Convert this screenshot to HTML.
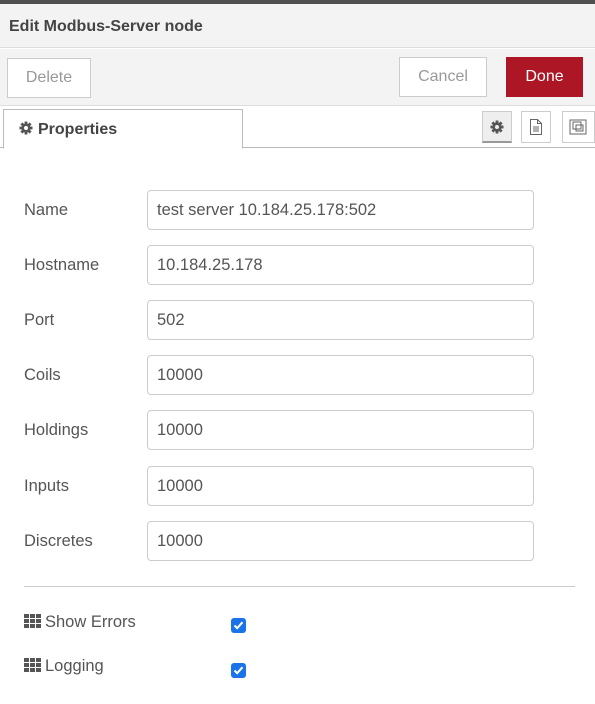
<!DOCTYPE html>
<html><head><meta charset="utf-8"><style>
*{box-sizing:border-box;margin:0;padding:0}
body{width:595px;height:704px;overflow:hidden;background:#fff;font-family:"Liberation Sans",Arial,sans-serif;color:#555;position:relative}
.top{position:absolute;left:0;top:0;width:595px;height:4px;background:#4f4f4f}
.hdr{position:absolute;left:0;top:4px;width:595px;height:44px;background:#f3f3f3;border-bottom:1px solid #ddd;font-weight:bold;font-size:16px;color:#444;padding:14px 0 0 9px}
.bar{position:absolute;left:0;top:49px;width:595px;height:57px;background:#f3f3f3;border-bottom:1px solid #ddd}
.btn{position:absolute;height:40px;border:1px solid #ccc;background:#fff;color:#999;font-size:16px;text-align:center;line-height:38px}
.tabs{position:absolute;left:0;top:106px;width:595px;height:42px;border-bottom:1px solid #bbb;background:#fff}
.tab{position:absolute;left:3px;top:3px;width:240px;height:40px;border:1px solid #bbb;border-bottom:1px solid #fff;background:#fff;font-weight:bold;font-size:16px;color:#444;padding:11px 0 0 15px}
.ib{position:absolute;top:5px;width:30px;height:32px;border:1px solid #ccc;background:#fff}
.lbl{position:absolute;left:24px;font-size:16.5px;color:#555}
.inp{position:absolute;left:147px;width:387px;height:40px;border:1px solid #ccc;border-radius:4px;font-size:16.5px;color:#555;padding:10px 0 0 9px}
.cb{position:absolute;left:231px;width:15px;height:15px;background:#1a73e8;border-radius:3px}
.cb svg{position:absolute;left:2px;top:2px}
.grid{display:inline-block;vertical-align:-1px;margin-right:4px}
</style></head><body>
<div class="top"></div>
<div class="hdr">Edit Modbus-Server node</div>
<div class="bar">
<div class="btn" style="left:7px;top:9px;width:84px">Delete</div>
<div class="btn" style="left:399px;top:8px;width:88px">Cancel</div>
<div class="btn" style="left:506px;top:8px;width:77px;background:#ad1625;border-color:#ad1625;color:#fff">Done</div>
</div>
<div class="tabs">
<div class="tab"><svg width="14" height="14" viewBox="0 0 14 14" style="vertical-align:-1px;margin-right:5px"><g fill="#555"><circle cx="7" cy="7" r="4.6"/><rect x="5.6" y="0.5" width="2.8" height="13"/><rect x="0.5" y="5.6" width="13" height="2.8"/><rect x="5.6" y="0.5" width="2.8" height="13" transform="rotate(45 7 7)"/><rect x="5.6" y="0.5" width="2.8" height="13" transform="rotate(-45 7 7)"/></g><circle cx="7" cy="7" r="2" fill="#fff"/></svg>Properties</div>
<div class="ib" style="left:482px;background:#eee;border-bottom:2px solid #999"><svg width="14" height="14" viewBox="0 0 14 14" style="position:absolute;left:7px;top:8px"><g fill="#555"><circle cx="7" cy="7" r="4.6"/><rect x="5.6" y="0.5" width="2.8" height="13"/><rect x="0.5" y="5.6" width="13" height="2.8"/><rect x="5.6" y="0.5" width="2.8" height="13" transform="rotate(45 7 7)"/><rect x="5.6" y="0.5" width="2.8" height="13" transform="rotate(-45 7 7)"/></g><circle cx="7" cy="7" r="2" fill="#eee"/></svg></div>
<div class="ib" style="left:521px"><svg width="14" height="16" viewBox="0 0 14 16" style="position:absolute;left:7px;top:7px" fill="none" stroke="#666" stroke-width="1"><path d="M1.5 .5h7l4 4v11h-11z M8.5 .5v4h4 M4 8h6 M4 10h6 M4 12h6"/></svg></div>
<div class="ib" style="left:562px;width:33px"><svg width="20" height="18" viewBox="0 0 20 18" style="position:absolute;left:5px;top:6px" fill="none" stroke="#666"><rect x="2" y="2" width="16" height="14"/><rect x="5" y="4" width="8" height="7"/><rect x="8" y="7" width="7" height="6"/></svg></div>
</div>
<div class="lbl" style="top:201px">Name</div><div class="inp" style="top:190px">test server 10.184.25.178:502</div>
<div class="lbl" style="top:256px">Hostname</div><div class="inp" style="top:245px">10.184.25.178</div>
<div class="lbl" style="top:311px">Port</div><div class="inp" style="top:300px">502</div>
<div class="lbl" style="top:366px">Coils</div><div class="inp" style="top:355px">10000</div>
<div class="lbl" style="top:421px">Holdings</div><div class="inp" style="top:410px">10000</div>
<div class="lbl" style="top:477px">Inputs</div><div class="inp" style="top:466px">10000</div>
<div class="lbl" style="top:532px">Discretes</div><div class="inp" style="top:521px">10000</div>
<div style="position:absolute;left:24px;top:586px;width:551px;height:1px;background:#ccc"></div>
<div class="lbl" style="top:613px"><svg class="grid" width="17" height="14" viewBox="0 0 17 14" fill="#555"><rect x="0" y="0" width="5" height="4"/><rect x="6" y="0" width="5" height="4"/><rect x="12" y="0" width="5" height="4"/><rect x="0" y="5" width="5" height="4"/><rect x="6" y="5" width="5" height="4"/><rect x="12" y="5" width="5" height="4"/><rect x="0" y="10" width="5" height="4"/><rect x="6" y="10" width="5" height="4"/><rect x="12" y="10" width="5" height="4"/></svg>Show Errors</div>
<div class="cb" style="top:618px"><svg width="11" height="11" viewBox="0 0 11 11"><path d="M1.5 5.5l2.7 2.7 5.3-6" fill="none" stroke="#fff" stroke-width="2"/></svg></div>
<div class="lbl" style="top:657px"><svg class="grid" width="17" height="14" viewBox="0 0 17 14" fill="#555"><rect x="0" y="0" width="5" height="4"/><rect x="6" y="0" width="5" height="4"/><rect x="12" y="0" width="5" height="4"/><rect x="0" y="5" width="5" height="4"/><rect x="6" y="5" width="5" height="4"/><rect x="12" y="5" width="5" height="4"/><rect x="0" y="10" width="5" height="4"/><rect x="6" y="10" width="5" height="4"/><rect x="12" y="10" width="5" height="4"/></svg>Logging</div>
<div class="cb" style="top:663px"><svg width="11" height="11" viewBox="0 0 11 11"><path d="M1.5 5.5l2.7 2.7 5.3-6" fill="none" stroke="#fff" stroke-width="2"/></svg></div>
</body></html>
